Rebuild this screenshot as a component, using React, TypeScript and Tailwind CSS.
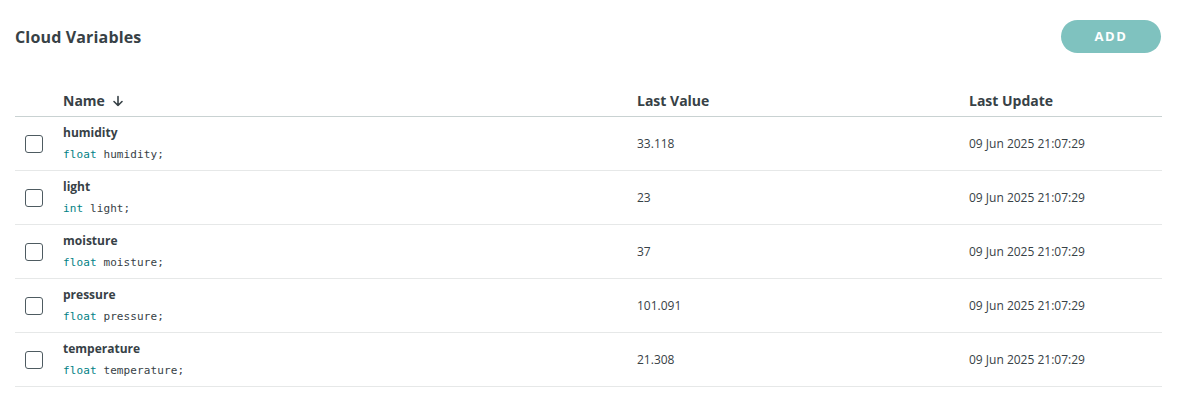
import React from "react";

const rows = [
  { name: "humidity", type: "float", value: "33.118" },
  { name: "light", type: "int", value: "23" },
  { name: "moisture", type: "float", value: "37" },
  { name: "pressure", type: "float", value: "101.091" },
  { name: "temperature", type: "float", value: "21.308" },
];

export default function App() {
  return (
    <div className="w-[1180px] h-[407px] bg-white pl-[15px] pr-[18px] pt-[20px]" style={{ fontFamily: '"Open Sans", sans-serif' }}>
      <div className="flex items-center justify-between h-[33px]">
        <h1 className="text-[16px] font-bold text-[#374146] tracking-[0.01em]">Cloud Variables</h1>
        <button className="w-[100px] h-[33px] rounded-full bg-[#7fc2bf] text-white text-[13px] font-bold tracking-[0.12em] mr-[1px]">ADD</button>
      </div>
      <div className="mt-[33px] w-[1147px]">
        <div className="grid grid-cols-[48px_574px_332px_1fr] h-[31px] items-center border-b border-[#c9d2d2] text-[14px] font-bold text-[#374146] pb-[1px]">
          <div />
          <div className="flex items-center gap-[7px]">
            Name
            <svg width="12" height="12" viewBox="0 0 12 12" fill="none" stroke="#374146" strokeWidth="1.6" strokeLinecap="round" strokeLinejoin="round">
              <path d="M6 1.5v9M2 6.5l4 4 4-4" />
            </svg>
          </div>
          <div>Last Value</div>
          <div>Last Update</div>
        </div>
        {rows.map((r) => (
          <div key={r.name} className="grid grid-cols-[48px_574px_332px_1fr] h-[54px] items-center border-b border-[#e6e8e8] text-[12px] text-[#374146]">
            <div className="pl-[10px] flex items-center">
              <div className="w-[18px] h-[18px] rounded-[3px] border-[1.5px] border-[#4e5b61]" />
            </div>
            <div className="flex flex-col -mt-[1px]">
              <span className="font-bold text-[12px] leading-[16px]">{r.name}</span>
              <span className="mt-[7px] text-[11px] leading-[14px] tracking-[0.01em]" style={{ fontFamily: '"DejaVu Sans Mono", monospace' }}>
                <span className="text-[#008184]">{r.type}</span> {r.name};
              </span>
            </div>
            <div>{r.value}</div>
            <div>09 Jun 2025 21:07:29</div>
          </div>
        ))}
      </div>
    </div>
  );
}
